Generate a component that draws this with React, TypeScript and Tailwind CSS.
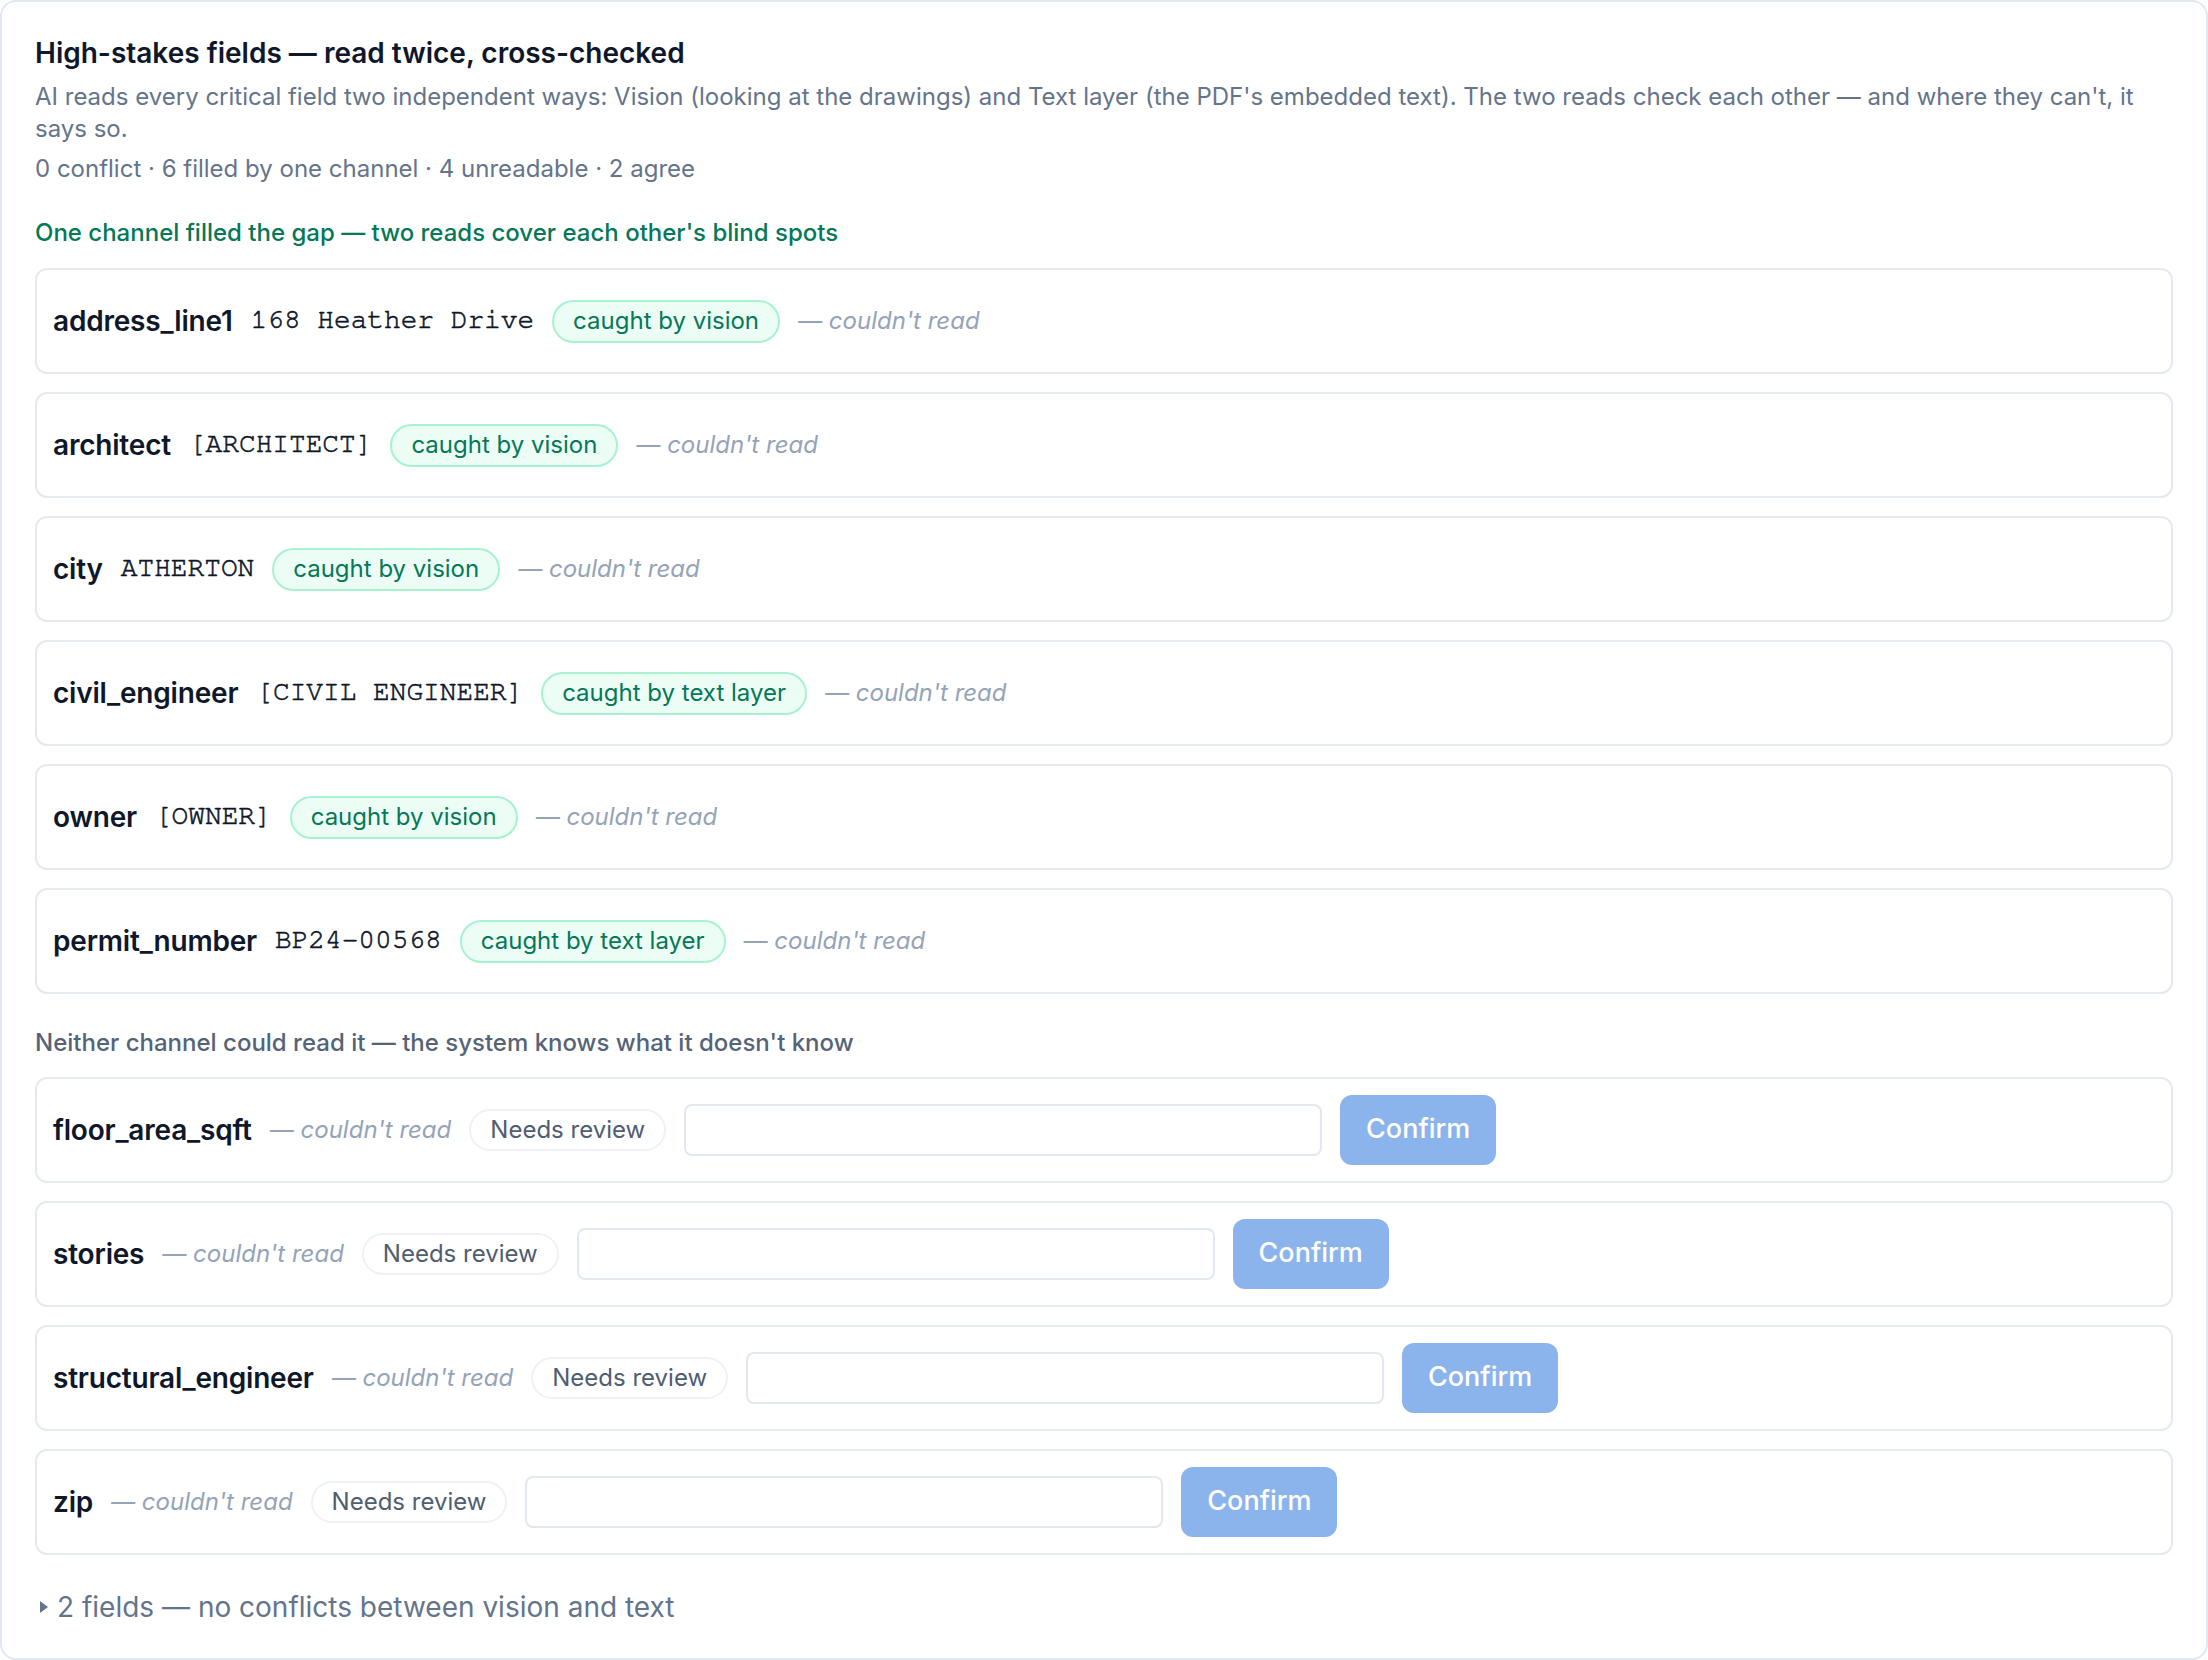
import React from "react";

type Caught = { name: string; value: string; via: string };

const caught: Caught[] = [
  { name: "address_line1", value: "168 Heather Drive", via: "caught by vision" },
  { name: "architect", value: "[ARCHITECT]", via: "caught by vision" },
  { name: "city", value: "ATHERTON", via: "caught by vision" },
  { name: "civil_engineer", value: "[CIVIL ENGINEER]", via: "caught by text layer" },
  { name: "owner", value: "[OWNER]", via: "caught by vision" },
  { name: "permit_number", value: "BP24-00568", via: "caught by text layer" },
];

const unreadable = ["floor_area_sqft", "stories", "structural_engineer", "zip"];

function Missing() {
  return <span className="text-[24px] italic text-[#94a3b8] whitespace-nowrap">— couldn't read</span>;
}

function FieldName({ children }: { children: React.ReactNode }) {
  return <span className="text-[28px] font-semibold text-[#0f172a] tracking-[-0.2px]">{children}</span>;
}

function CaughtRow({ item }: { item: Caught }) {
  return (
    <div className="h-[106px] rounded-[12px] border-2 border-[#e5e9f0] bg-white pl-[16px] pr-[16px] flex items-center gap-[18px]">
      <FieldName>{item.name}</FieldName>
      <span className="font-['Nimbus_Mono_PS','FreeMono','Courier_New',monospace] text-[27.8px] text-[#0f172a] [-webkit-text-stroke:0.6px_#0f172a] whitespace-pre">
        {item.value}
      </span>
      <span className="h-[43px] px-[19px] rounded-full border-2 border-[#a7f3d0] bg-[#ecfdf5] text-[#047857] text-[24px] flex items-center whitespace-nowrap">
        {item.via}
      </span>
      <Missing />
    </div>
  );
}

function ReviewRow({ name }: { name: string }) {
  return (
    <div className="h-[106px] rounded-[12px] border-2 border-[#e5e9f0] bg-white pl-[16px] pr-[16px] flex items-center gap-[18px]">
      <FieldName>{name}</FieldName>
      <Missing />
      <span className="h-[42px] px-[19px] rounded-full border-2 border-[#eef2f6] bg-white text-[#4f5d71] text-[24px] flex items-center whitespace-nowrap">
        Needs review
      </span>
      <input
        type="text"
        className="w-[638px] h-[52px] rounded-[8px] border-2 border-[#e2e8f0] bg-white px-[14px] text-[24px] outline-none"
      />
      <button
        type="button"
        disabled
        className="w-[156px] h-[70px] rounded-[12px] bg-[#8cb4ec] text-white text-[27px] font-medium"
      >
        Confirm
      </button>
    </div>
  );
}

export default function App() {
  return (
    <div className="w-[2208px] h-[1660px] bg-white">
      <div className="w-full h-full rounded-[16px] border-2 border-[#e2e8f0] bg-white px-[33px] pt-[32px] font-['Inter',sans-serif]">
        <h2 className="text-[28px] leading-[38px] font-semibold text-[#0f172a]">
          High-stakes fields — read twice, cross-checked
        </h2>
        <p className="mt-[9px] text-[24px] leading-[31.5px] text-[#64748b]">
          AI reads every critical field two independent ways: Vision (looking at the drawings) and Text layer (the
          PDF's embedded text). The two reads check each other — and where they can't, it says so.
        </p>
        <p className="mt-[9px] text-[24px] leading-[31.5px] text-[#64748b]">
          0 conflict · 6 filled by one channel · 4 unreadable · 2 agree
        </p>

        <h3 className="mt-[32px] text-[24px] leading-[31.5px] font-medium text-[#047857]">
          One channel filled the gap — two reads cover each other's blind spots
        </h3>
        <div className="mt-[20px] flex flex-col gap-[18px]">
          {caught.map((c) => (
            <CaughtRow key={c.name} item={c} />
          ))}
        </div>

        <h3 className="mt-[33px] text-[24px] leading-[31.5px] font-medium text-[#556378]">
          Neither channel could read it — the system knows what it doesn't know
        </h3>
        <div className="mt-[18px] flex flex-col gap-[18px]">
          {unreadable.map((n) => (
            <ReviewRow key={n} name={n} />
          ))}
        </div>

        <div className="mt-[34px] flex items-center gap-[8px] text-[28px] leading-[36px] text-[#64748b]">
          <svg width="10" height="14" viewBox="0 0 10 14" className="ml-[4px]">
            <path d="M1 1 L9 7 L1 13 Z" fill="#64748b" />
          </svg>
          <span>2 fields — no conflicts between vision and text</span>
        </div>
      </div>
    </div>
  );
}
